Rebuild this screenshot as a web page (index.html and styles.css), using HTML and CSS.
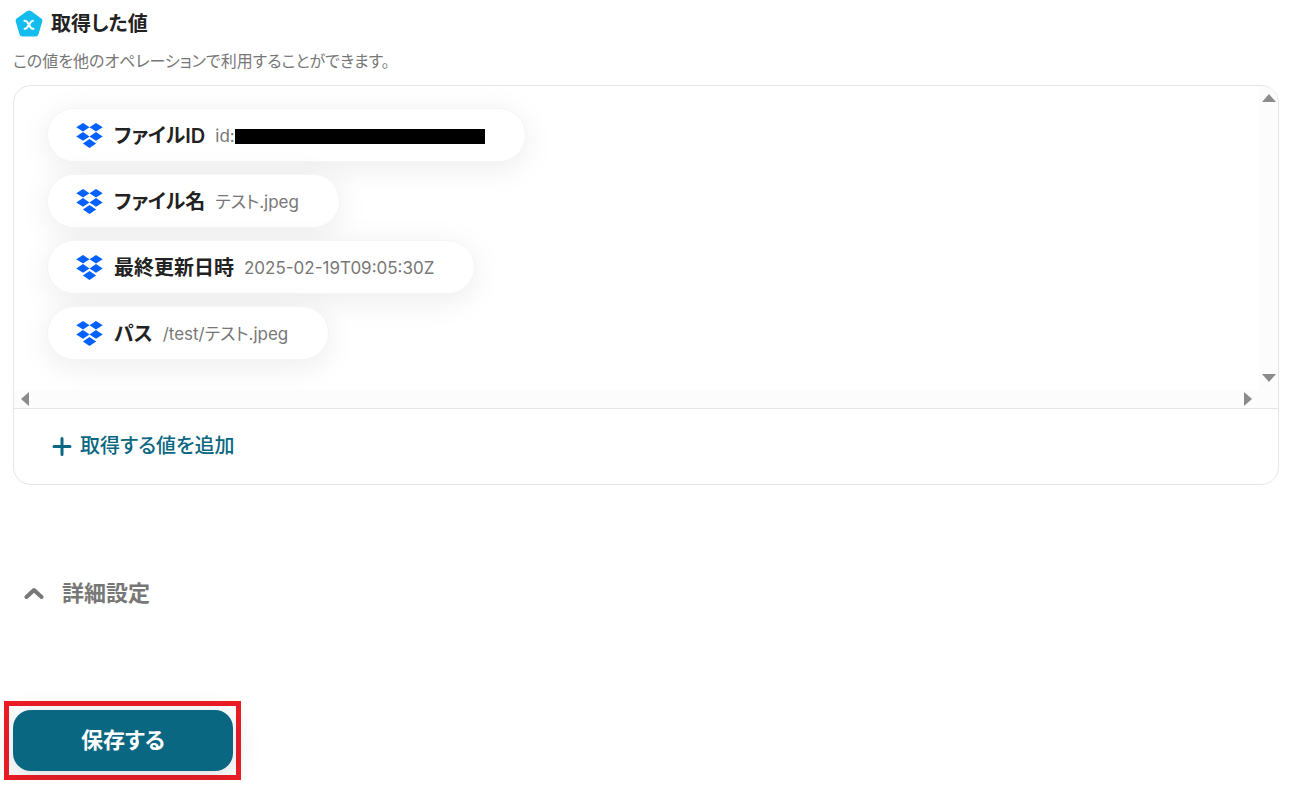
FILE: index.html
```
<!DOCTYPE html>
<html lang="ja">
<head>
    <meta charset="UTF-8">
    <meta name="viewport" content="width=device-width, initial-scale=1.0">
    <title>取得した値</title>
    <link rel="stylesheet" href="styles.css">
</head>
<body>
    <svg class="sprite" aria-hidden="true">
        <symbol id="dropbox" viewBox="0 0 27 26">
            <path d="M7 0l6.500 4.300L7 8.600.3 4.300zM20 0l6.700 4.300L20 8.600l-6.500-4.300zM7 9l6.500 4.400L7 17.800.3 13.400zM20 9l6.700 4.400L20 17.800l-6.500-4.400zM13.500 15.900l6.600 4.500-6.600 4.600-6.600-4.600z"/>
        </symbol>
    </svg>

    <main class="container">
        <h2 class="title">
            <svg class="title-icon" viewBox="0 0 28 28" aria-hidden="true">
                <path d="M12.200 1.100a3.200 3.200 0 0 1 3.800 0l10 7.100a3.200 3.200 0 0 1 1.200 3.600l-3.700 12.500a3.200 3.200 0 0 1-3.100 2.300H7.600a3.200 3.200 0 0 1-3.100-2.300L.8 11.800A3.200 3.200 0 0 1 2 8.200z" fill="#12bdee"/>
                <path d="M9.500 10.800q1.800-.2 2.800 1.400l3.400 5.400q1 1.500 2.800 1.200M18 10.800q-1.300 0-2.200 1.300l-3.800 5.500q-.9 1.200-2.400 1.200" fill="none" stroke="#fff" stroke-width="2" stroke-linecap="round"/>
            </svg>
            取得した値
        </h2>
        <p class="description">この値を他のオペレーションで利用することができます。</p>

        <section class="card">
            <div class="values">
                <ul class="value-list">
                    <li class="chip">
                        <svg class="chip-icon"><use href="#dropbox"/></svg>
                        <span class="chip-label">ファイルID</span>
                        <span class="chip-value">id:<span class="masked"></span></span>
                    </li>
                    <li class="chip">
                        <svg class="chip-icon"><use href="#dropbox"/></svg>
                        <span class="chip-label">ファイル名</span>
                        <span class="chip-value">テスト.jpeg</span>
                    </li>
                    <li class="chip">
                        <svg class="chip-icon"><use href="#dropbox"/></svg>
                        <span class="chip-label">最終更新日時</span>
                        <span class="chip-value">2025-02-19T09:05:30Z</span>
                    </li>
                    <li class="chip">
                        <svg class="chip-icon"><use href="#dropbox"/></svg>
                        <span class="chip-label">パス</span>
                        <span class="chip-value">/test/テスト.jpeg</span>
                    </li>
                </ul>
                <div class="scrollbar vertical" aria-hidden="true">
                    <svg width="14" height="8" viewBox="0 0 14 8"><path d="M7 0l7 8H0z"/></svg>
                    <svg width="14" height="8" viewBox="0 0 14 8"><path d="M0 0h14L7 8z"/></svg>
                </div>
                <div class="scrollbar horizontal" aria-hidden="true">
                    <svg width="8" height="14" viewBox="0 0 8 14"><path d="M8 0v14L0 7z"/></svg>
                    <svg width="8" height="14" viewBox="0 0 8 14"><path d="M0 0l8 7-8 7z"/></svg>
                </div>
            </div>
            <div class="card-footer">
                <button class="add-btn" type="button">
                    <svg width="20" height="20" viewBox="0 0 20 20" aria-hidden="true"><path d="M10 1.500v16M2 9.500h16"/></svg>
                    取得する値を追加
                </button>
            </div>
        </section>

        <button class="detail-btn" type="button" aria-expanded="false">
            <svg width="20" height="12" viewBox="0 0 20 12" aria-hidden="true"><path d="M2.500 10L10 3l7.500 7"/></svg>
            詳細設定
        </button>

        <div class="save-frame">
            <button class="save-btn" type="button">保存する</button>
        </div>
    </main>
</body>
</html>
```
FILE: styles.css
```
* {
    box-sizing: border-box;
}
body {
    font-family: Inter, "Noto Sans CJK JP", sans-serif;
    font-feature-settings: "palt";
    color: #222;
    background-color: #fff;
    margin: 0;
}
button {
    font: inherit;
    font-feature-settings: inherit;
    border: none;
    background: none;
    padding: 0;
    cursor: pointer;
}
.sprite {
    display: none;
}
.container {
    padding: 9px 14px 0 13px;
}
.title {
    display: flex;
    align-items: center;
    gap: 8px;
    margin: 0;
    padding-left: 2px;
    font-size: 20px;
    font-weight: 600;
    line-height: 30px;
}
.title-icon {
    width: 28px;
    height: 28px;
}
.description {
    margin: 11px 0 12px;
    font-size: 16px;
    line-height: 23px;
    color: #777;
}
.card {
    border: 1px solid #e5e5e5;
    border-radius: 18px;
    overflow: hidden;
}
.values {
    display: grid;
    grid-template-columns: 1fr 19px;
    grid-template-rows: auto 18px;
}
.value-list {
    display: flex;
    flex-direction: column;
    align-items: flex-start;
    gap: 12px;
    margin: 0;
    padding: 22px 33px 30px;
    list-style: none;
    overflow: hidden;
}
.chip {
    display: flex;
    align-items: center;
    height: 54px;
    padding: 2px 40px 0 28px;
    border: 1px solid #f5f5f5;
    border-radius: 27px;
    background-color: #fff;
    box-shadow: 0 6px 32px rgba(0, 0, 0, 0.08);
}
.chip-icon {
    width: 27px;
    height: 26px;
    fill: #0061ff;
}
.chip-label {
    margin: 0 10px 0 11px;
    font-size: 20px;
    font-weight: 600;
    line-height: 30px;
}
.chip-value {
    display: flex;
    align-items: center;
    font-size: 17px;
    line-height: 26px;
    color: #777;
}
.masked {
    width: 250px;
    height: 15px;
    background-color: #000;
}
.scrollbar {
    display: flex;
    align-items: center;
    justify-content: space-between;
    background-color: #fcfcfc;
    fill: #8b8b8b;
}
.vertical {
    flex-direction: column;
    padding: 8px 0;
}
.horizontal {
    grid-column: 1 / 3;
    padding: 0 26px 0 7px;
}
.card-footer {
    padding: 22px 38px;
    border-top: 1px solid #e5e5e5;
}
.add-btn {
    display: flex;
    align-items: center;
    gap: 8px;
    font-size: 20px;
    font-weight: 500;
    line-height: 31px;
    color: #0a6781;
}
.add-btn svg,
.detail-btn svg {
    fill: none;
    stroke: currentColor;
    stroke-width: 3;
    stroke-linecap: round;
}
.detail-btn {
    display: flex;
    align-items: center;
    gap: 18px;
    margin: 91px 0 0 11px;
    font-size: 22px;
    font-weight: 600;
    line-height: 34px;
    color: #777;
}
.detail-btn svg {
    stroke-width: 4;
    stroke-linejoin: round;
}
.save-frame {
    width: 237px;
    margin: 91px 0 0 -9px;
    padding: 4px;
    border: 5px solid #ed1c24;
}
.save-btn {
    display: block;
    width: 220px;
    height: 61px;
    padding-bottom: 5px;
    border-radius: 18px;
    font-size: 22px;
    font-weight: 700;
    color: #fff;
    background-color: #0a6781;
    box-shadow: 0 6px 28px rgba(20, 40, 60, 0.16);
}
```
